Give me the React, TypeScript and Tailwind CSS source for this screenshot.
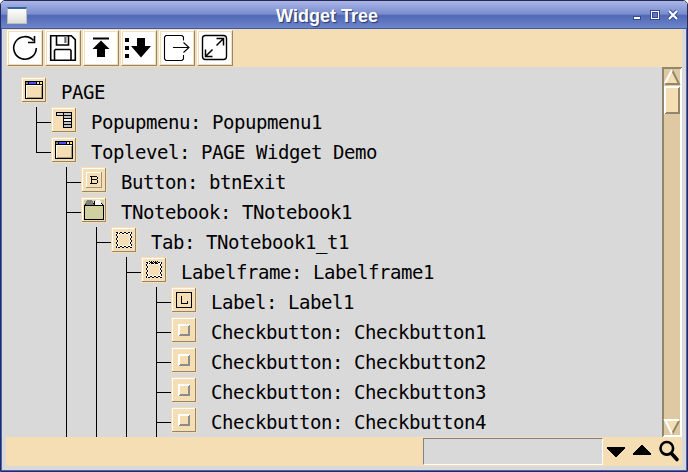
import React from "react";

type Kind = "window" | "menu" | "button" | "notebook" | "frame" | "labelframe" | "label" | "check";
type Branch = "none" | "pipe" | "tee" | "elbow";

const rows: { text: string; kind: Kind; guides: Branch[] }[] = [
  { text: "PAGE", kind: "window", guides: [] },
  { text: "Popupmenu: Popupmenu1", kind: "menu", guides: ["tee"] },
  { text: "Toplevel: PAGE Widget Demo", kind: "window", guides: ["elbow"] },
  { text: "Button: btnExit", kind: "button", guides: ["none", "tee"] },
  { text: "TNotebook: TNotebook1", kind: "notebook", guides: ["none", "tee"] },
  { text: "Tab: TNotebook1_t1", kind: "frame", guides: ["none", "pipe", "tee"] },
  { text: "Labelframe: Labelframe1", kind: "labelframe", guides: ["none", "pipe", "pipe", "tee"] },
  { text: "Label: Label1", kind: "label", guides: ["none", "pipe", "pipe", "pipe", "tee"] },
  { text: "Checkbutton: Checkbutton1", kind: "check", guides: ["none", "pipe", "pipe", "pipe", "tee"] },
  { text: "Checkbutton: Checkbutton2", kind: "check", guides: ["none", "pipe", "pipe", "pipe", "tee"] },
  { text: "Checkbutton: Checkbutton3", kind: "check", guides: ["none", "pipe", "pipe", "pipe", "tee"] },
  { text: "Checkbutton: Checkbutton4", kind: "check", guides: ["none", "pipe", "pipe", "pipe", "tee"] },
];

function Guide({ type }: { type: Branch }) {
  return (
    <svg className="h-[30px] w-[30px] shrink-0" viewBox="0 0 30 30" shapeRendering="crispEdges">
      {type !== "none" && <rect x="15" y="0" width="1" height={type === "elbow" ? 16 : 30} />}
      {(type === "tee" || type === "elbow") && <rect x="15" y="15" width="15" height="1" />}
    </svg>
  );
}

// One scalloped edge per quarter turn around the centre of the 26px icon.
const scallops = Array.from({ length: 8 }, (_, i) => ({ x: 5 + i * 2, depth: i % 2 === 0 ? 0 : 1 }));

function Scallop() {
  return (
    <>
      {["rotate(0 13 13)", "rotate(90 13 13)", "rotate(180 13 13)", "rotate(270 13 13)"].map((turn) => (
        <g key={turn} transform={turn}>
          {scallops.map((s) => (
            <React.Fragment key={s.x}>
              <rect x={s.x} y={6 + s.depth} width="2" height="1" fill="#fff" />
              <rect x={s.x} y={5 + s.depth} width="2" height="1" fill="#000" />
            </React.Fragment>
          ))}
        </g>
      ))}
    </>
  );
}

function NodeGlyph({ kind }: { kind: Kind }) {
  switch (kind) {
    case "window":
      return (
        <>
          <rect x="4" y="4" width="18" height="18" />
          <rect x="5" y="5" width="2" height="2" fill="#7f7f7f" />
          <rect x="8" y="5" width="7" height="2" fill="#4a50ff" />
          <rect x="16" y="5" width="2" height="2" fill="#f5deb3" />
          <rect x="19" y="5" width="2" height="2" fill="#ffe78a" />
          <rect x="5" y="8" width="16" height="13" fill="#fff" />
          <rect x="6" y="9" width="15" height="12" fill="#a89a80" />
          <rect x="6" y="9" width="14" height="11" fill="#f5deb3" />
        </>
      );
    case "menu":
      return (
        <>
          <rect x="5" y="5" width="16" height="4" />
          <rect x="12" y="5" width="9" height="16" />
          <rect x="6" y="6" width="6" height="2" fill="#d0d0d0" />
          <rect x="13" y="6" width="7" height="2" fill="#c3c3c3" />
          <rect x="13" y="9" width="7" height="2" fill="#c3c3c3" />
          <rect x="13" y="12" width="7" height="2" fill="#fff" />
          <rect x="13" y="15" width="7" height="2" fill="#c3c3c3" />
          <rect x="13" y="18" width="7" height="2" fill="#c3c3c3" />
        </>
      );
    case "button":
      return (
        <>
          <path d="M5 5h16v16h-16z" fill="#9c9484" />
          <path d="M5 5h15v15h-15z" fill="#fff" />
          <path d="M6 6h14v14h-14z" fill="#f5deb3" />
          <path d="M10.5 9v8M9 9.5h7M10 12.5h6M9 16.5h7M16.5 10v2M16.5 13v3" fill="none" stroke="#000" />
        </>
      );
    case "notebook":
      return (
        <>
          <path d="M3 3h20v20H3z" fill="#d0d0a0" />
          <path d="M4 8V6h1V4h1V3h5v1h1v2h1v2z" fill="#7f7f7f" />
          <path d="M13 8V6h1V4h1V3h4v1h1v2h1v2z" fill="#fff" />
          <path d="M3 8.5h20M4 7.5h1M12 6.5h1M13 7.5h1M20 6.5h1M21 7.5h1M22.5 8v15M3 22.5h20M3.5 8v14M13.5 4v3" fill="none" stroke="#000" />
        </>
      );
    case "frame":
      return <Scallop />;
    case "labelframe":
      return (
        <>
          <Scallop />
          <path d="M8 4.5h10M9 5.5h9M8 6.5h10" stroke="#000" strokeDasharray="1 1" />
        </>
      );
    case "label":
      return <path d="M5.5 5.5h15v15h-15zM10.5 9v7.5h6V14" fill="none" stroke="#000" />;
    case "check":
      return (
        <>
          <rect x="7" y="7" width="12" height="12" fill="#8c8c8c" />
          <path d="M7 7h12l-2 2v8H9l-2 2z" fill="#fff" />
          <rect x="9" y="9" width="8" height="8" fill="#f5deb3" />
        </>
      );
  }
}

function NodeIcon({ kind }: { kind: Kind }) {
  return (
    <svg className="h-[26px] w-[26px] shrink-0" viewBox="0 0 26 26" shapeRendering="crispEdges">
      <rect width="26" height="26" fill="#f5deb3" />
      <path d="M1 1h24v24H1z" fill="#93866b" />
      <path d="M1 1h23v23H1z" fill="#fff" />
      <path d="M2 2h22v22H2z" fill="#f5deb3" />
      <NodeGlyph kind={kind} />
    </svg>
  );
}

function Tool({ children }: { children: React.ReactNode }) {
  return (
    <button className="h-9 w-9 border border-t-white border-l-white border-r-[#93866b] border-b-[#93866b] bg-[#f5deb3] p-px">
      <svg className="block h-8 w-8 bg-white" viewBox="0 0 32 32" fill="none" stroke="#000">
        {children}
      </svg>
    </button>
  );
}

export default function App() {
  return (
    <div className="flex h-[472px] w-[688px] flex-col overflow-hidden rounded-t-[5px] border border-[#252a55] bg-[#d9d9d9]">
      <header className="flex h-7 shrink-0 items-start border-b border-[#4058a8] bg-[linear-gradient(#a9b6e6,#7a8ccf_48%,#5169b5_54%,#6d85cb)] px-[6px]">
        <div className="mt-[6px] h-[17px] w-5 border border-t-2 border-[#b9beb8] border-t-[#3465a4] bg-linear-to-b from-white to-[#deded8]" />
        <h1 className="flex-1 pt-[3px] pl-[30px] text-center font-['Liberation_Sans',sans-serif] text-[18px] leading-6 font-bold text-white [text-shadow:1px_1px_1px_#28376d]">
          <span className="mr-[32px]">Widget Tree</span>
        </h1>
        <svg className="mt-1 h-5 w-[52px]" viewBox="0 0 52 20" shapeRendering="crispEdges">
          <path d="M4 11h8v4H4zM21 5h10v10H21z" fill="#344b91" />
          <path d="M5 12h6v2H5zM22 6h8v8h-8z" fill="#fff" />
          <path d="M23 7h6v6h-6z" fill="#344b91" />
          <path d="M24 8h4v4h-4z" fill="#5f76c0" />
          <path d="M40 6l8 8M48 6l-8 8" stroke="#344b91" strokeWidth="4" shapeRendering="auto" />
          <path d="M40 6l8 8M48 6l-8 8" stroke="#fff" strokeWidth="2.2" shapeRendering="auto" />
        </svg>
      </header>
      <div className="flex min-h-0 flex-1 flex-col border-x border-b border-[#4864bd] px-1 pb-1">
        <nav className="flex h-[38px] shrink-0 gap-[2px] bg-[#f5deb3] pt-px pl-px">
          <Tool>
            <path d="M24.5 8.5A11.3 11.3 0 1 0 27.3 16M25.5 4v6.500H19" strokeWidth="1.6" />
          </Tool>
          <Tool>
            <path d="M3.7 3.7h20.600l4 4v20.600H3.7zM9.5 4v9h12V4M7.5 28V18.500l1-1h14.500l1 1V28" strokeWidth="1.6" />
            <path d="M18 5h3v6h-3z" fill="#b5b5b5" stroke="none" />
            <path d="M18 5v6" strokeWidth="0.8" />
          </Tool>
          <Tool>
            <path d="M8 6.5h16" strokeWidth="1.8" />
            <path d="M16 8.5l8.500 8.500H20v8h-8v-8H7.500z" fill="#000" stroke="none" />
          </Tool>
          <Tool>
            <path d="M2 6h4v4H2zM2 14h4v4H2zM2 22h4v4H2zM14 6h8v8h6L18 25.500 8 14h6z" fill="#000" stroke="none" />
          </Tool>
          <Tool>
            <path d="M22.5 8.5V5L21 3.5H5L3.5 5v22L5 28.5h16l1.5-1.500v-4M12 15.5h16M22.5 10.5l5.500 5-5.500 5" strokeWidth="1.1" />
          </Tool>
          <Tool>
            <rect x="3.5" y="3.5" width="24" height="24" rx="3" strokeWidth="1.4" />
            <path d="M17.5 13.5l7-7M17.5 6.5h7v7M13.5 17.5l-7 7M6.5 17.5v7h7" strokeWidth="1.5" />
          </Tool>
        </nav>
        <main className="flex min-h-0 flex-1">
          <div className="flex-1 overflow-hidden pt-[10px] pl-[15px]">
            {rows.map((row) => (
              <div key={row.text} className="flex h-[30px] items-start">
                {row.guides.map((g, i) => (
                  <Guide key={i} type={g} />
                ))}
                <NodeIcon kind={row.kind} />
                <span className="pl-[14px] font-['DejaVu_Sans_Mono',monospace] text-[19px] leading-[30px] tracking-[-0.438px] whitespace-pre text-black">{row.text}</span>
              </div>
            ))}
          </div>
          <svg className="h-[370px] w-5 shrink-0" viewBox="0 0 20 370" shapeRendering="crispEdges">
            <path d="M0 0h20v370H0z" fill="#93866b" />
            <path d="M20 0v370H0l2-2h16V2z" fill="#fff" />
            <path d="M2 2h16v366H2z" fill="#dec9a2" />
            <path d="M10 3L18 18H2z" fill="#f5deb3" />
            <path d="M10 3l7 14H3" fill="none" stroke="#93866b" strokeWidth="2" shapeRendering="auto" />
            <path d="M10 3L3 16" stroke="#fff" strokeWidth="2" shapeRendering="auto" />
            <path d="M2 19h16v28H2z" fill="#93866b" />
            <path d="M2 19h16l-2 2v24H4l-2 2z" fill="#fff" />
            <path d="M4 21h12v24H4z" fill="#f5deb3" />
            <path d="M3 353h14l-7 14z" fill="#f5deb3" />
            <path d="M17 354l-7 13" stroke="#93866b" strokeWidth="2" shapeRendering="auto" />
            <path d="M17 353H3l7 14" fill="none" stroke="#fff" strokeWidth="2" shapeRendering="auto" />
          </svg>
        </main>
        <footer className="flex h-[29px] shrink-0 justify-end bg-[#f5deb3]">
          <div className="mt-px h-[27px] w-[180px] border border-t-[#828282] border-r-white border-b-white border-l-[#828282] bg-[#d9d9d9]" />
          <svg className="h-[29px] w-[79px]" viewBox="603 437 79 29">
            <path d="M607 447h18v1l-8 9h-2l-8-9zM633 455h18v-1l-8-9h-2l-8 9z" shapeRendering="crispEdges" />
            <circle cx="666.8" cy="448.3" r="6.3" fill="none" stroke="#000" strokeWidth="2.6" />
            <path d="M671.5 453.5l5.5 6" stroke="#000" strokeWidth="3.6" strokeLinecap="round" />
          </svg>
        </footer>
      </div>
    </div>
  );
}
